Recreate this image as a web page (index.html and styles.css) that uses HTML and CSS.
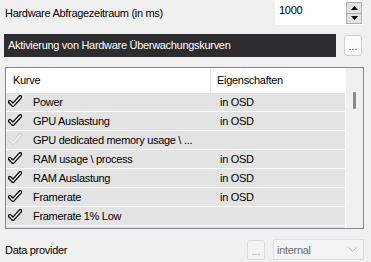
FILE: index.html
```html
<!DOCTYPE html>
<html lang="de">
<head>
  <meta charset="UTF-8">
  <title>Hardware Überwachung</title>
  <link rel="stylesheet" href="styles.css">
</head>
<body>
  <div class="panel">
    <div class="top-row">
      <span class="label">Hardware Abfragezeitraum (in ms)</span>
      <div class="spinner">
        <span class="spin-value">1000</span>
        <div class="spin-buttons">
          <div class="spin-btn"><svg width="7" height="4" viewBox="0 0 7 4"><polygon points="0,4 7,4 3.5,0" fill="#000"/></svg></div>
          <div class="spin-btn"><svg width="7" height="4" viewBox="0 0 7 4"><polygon points="0,0 7,0 3.5,4" fill="#000"/></svg></div>
        </div>
      </div>
    </div>

    <div class="bar-row">
      <div class="dark-bar">Aktivierung von Hardware Überwachungskurven</div>
      <div class="dots-btn">...</div>
    </div>

    <div class="list">
      <div class="list-main">
        <div class="list-head">
          <div class="col-name">Kurve</div>
          <div class="col-props">Eigenschaften</div>
        </div>
        <div class="list-row"><span class="check"><svg width="14" height="13" viewBox="0 0 14 13"><path d="M1.8 6.8 L5 10 L12.3 2" fill="none" stroke="#000" stroke-width="4" stroke-linecap="round" stroke-linejoin="round"/><path d="M1.8 6.8 L5 10 L12.3 2" fill="none" stroke="#fff" stroke-width="1.3" stroke-linecap="round" stroke-linejoin="round"/></svg></span><span class="name">Power</span><span class="props">in OSD</span></div>
        <div class="list-row"><span class="check"><svg width="14" height="13" viewBox="0 0 14 13"><path d="M1.8 6.8 L5 10 L12.3 2" fill="none" stroke="#000" stroke-width="4" stroke-linecap="round" stroke-linejoin="round"/><path d="M1.8 6.8 L5 10 L12.3 2" fill="none" stroke="#fff" stroke-width="1.3" stroke-linecap="round" stroke-linejoin="round"/></svg></span><span class="name">GPU Auslastung</span><span class="props">in OSD</span></div>
        <div class="list-row"><span class="check"><svg width="14" height="13" viewBox="0 0 14 13"><path d="M1.8 6.8 L5 10 L12.3 2" fill="none" stroke="#d4d4d4" stroke-width="4" stroke-linecap="round" stroke-linejoin="round"/><path d="M1.8 6.8 L5 10 L12.3 2" fill="none" stroke="#f4f4f4" stroke-width="1.3" stroke-linecap="round" stroke-linejoin="round"/></svg></span><span class="name">GPU dedicated memory usage \ ...</span><span class="props"></span></div>
        <div class="list-row"><span class="check"><svg width="14" height="13" viewBox="0 0 14 13"><path d="M1.8 6.8 L5 10 L12.3 2" fill="none" stroke="#000" stroke-width="4" stroke-linecap="round" stroke-linejoin="round"/><path d="M1.8 6.8 L5 10 L12.3 2" fill="none" stroke="#fff" stroke-width="1.3" stroke-linecap="round" stroke-linejoin="round"/></svg></span><span class="name">RAM usage \ process</span><span class="props">in OSD</span></div>
        <div class="list-row"><span class="check"><svg width="14" height="13" viewBox="0 0 14 13"><path d="M1.8 6.8 L5 10 L12.3 2" fill="none" stroke="#000" stroke-width="4" stroke-linecap="round" stroke-linejoin="round"/><path d="M1.8 6.8 L5 10 L12.3 2" fill="none" stroke="#fff" stroke-width="1.3" stroke-linecap="round" stroke-linejoin="round"/></svg></span><span class="name">RAM Auslastung</span><span class="props">in OSD</span></div>
        <div class="list-row"><span class="check"><svg width="14" height="13" viewBox="0 0 14 13"><path d="M1.8 6.8 L5 10 L12.3 2" fill="none" stroke="#000" stroke-width="4" stroke-linecap="round" stroke-linejoin="round"/><path d="M1.8 6.8 L5 10 L12.3 2" fill="none" stroke="#fff" stroke-width="1.3" stroke-linecap="round" stroke-linejoin="round"/></svg></span><span class="name">Framerate</span><span class="props">in OSD</span></div>
        <div class="list-row"><span class="check"><svg width="14" height="13" viewBox="0 0 14 13"><path d="M1.8 6.8 L5 10 L12.3 2" fill="none" stroke="#000" stroke-width="4" stroke-linecap="round" stroke-linejoin="round"/><path d="M1.8 6.8 L5 10 L12.3 2" fill="none" stroke="#fff" stroke-width="1.3" stroke-linecap="round" stroke-linejoin="round"/></svg></span><span class="name">Framerate 1% Low</span><span class="props"></span></div>
        <div class="list-row"><span class="check"></span><span class="name"></span><span class="props"></span></div>
      </div>
      <div class="scrollbar"><div class="thumb"></div></div>
    </div>

    <div class="bottom-row">
      <span class="label">Data provider</span>
      <div class="small-btn">...</div>
      <div class="dropdown">
        <span>internal</span>
        <svg width="9" height="5" viewBox="0 0 9 5"><path d="M0.5 0.5 L4.5 4.5 L8.5 0.5" fill="none" stroke="#b8b8b8" stroke-width="1"/></svg>
      </div>
    </div>
  </div>
</body>
</html>
```

FILE: styles.css
```css
body {
  margin: 0;
  background: #f0f0f0;
  font-family: "Liberation Sans", Arial, sans-serif;
  font-size: 11px;
  letter-spacing: -0.3px;
  color: #000;
}
.panel {
  width: 371px;
  height: 262px;
  overflow: hidden;
  white-space: nowrap;
}
.top-row {
  display: flex;
  align-items: center;
  height: 26px;
  padding-left: 5px;
}
.top-row .label {
  flex: 1;
  padding-bottom: 1px;
}
.spinner {
  display: flex;
  width: 88px;
  height: 25px;
  margin-right: 8px;
  background: #fff;
  align-self: flex-start;
}
.spin-value {
  flex: 1;
  padding: 4px 0 0 4px;
}
.spin-buttons {
  display: flex;
  flex-direction: column;
  width: 14px;
  margin: 2px 1px 1px 0;
  border: 1px solid #adadad;
}
.spin-btn {
  flex: 1;
  display: flex;
  align-items: center;
  justify-content: center;
  background: #e1e1e1;
}
.spin-btn + .spin-btn {
  border-top: 1px solid #adadad;
}
.bar-row {
  display: flex;
  align-items: center;
  margin-top: 8px;
  padding-left: 4px;
  height: 23px;
}
.dark-bar {
  width: 328px;
  height: 23px;
  line-height: 22px;
  padding-left: 4px;
  background: #2d2d30;
  color: #fff;
}
.dots-btn {
  width: 16px;
  height: 19px;
  margin-left: 8px;
  border: 1px solid #cfcfcf;
  border-radius: 3px;
  background: #fbfbfb;
  font-size: 10px;
  letter-spacing: 0;
  text-align: center;
  line-height: 22px;
  color: #333;
}
.list {
  display: flex;
  margin: 10px 0 0 5px;
  width: 357px;
  height: 160px;
  border: 1px solid #828790;
  background: #fff;
  overflow: hidden;
}
.list-main {
  width: 339px;
}
.list-head {
  display: flex;
  height: 25px;
  line-height: 25px;
}
.col-name {
  width: 197px;
  padding-left: 7px;
  border-right: 1px solid #e5e5e5;
}
.col-props {
  padding-left: 6px;
}
.list-row {
  display: flex;
  align-items: center;
  height: 18px;
  margin-bottom: 1px;
  background: #e3e3e3;
}
.check {
  width: 25px;
  padding: 0 0 2px 2px;
  display: flex;
  align-items: center;
}
.name {
  width: 187px;
}
.props {
  flex: 1;
}
.scrollbar {
  width: 17px;
  margin-left: 1px;
  background: #f0f0f0;
  position: relative;
}
.thumb {
  position: absolute;
  left: 7px;
  top: 24px;
  width: 3px;
  height: 17px;
  background: #8a8a8a;
  border-radius: 1px;
}
.bottom-row {
  display: flex;
  align-items: center;
  margin-top: 10px;
  padding-left: 5px;
  height: 21px;
}
.bottom-row .label {
  flex: 1;
}
.small-btn {
  width: 16px;
  height: 18px;
  border: 1px solid #dcdcdc;
  border-radius: 3px;
  background: #f4f4f4;
  color: #9a9a9a;
  font-size: 10px;
  letter-spacing: 0;
  text-align: center;
  line-height: 22px;
}
.dropdown {
  display: flex;
  align-items: center;
  justify-content: space-between;
  width: 80px;
  height: 19px;
  margin: 0 7px 0 8px;
  padding: 0 6px 0 3px;
  border: 1px solid #dedede;
  background: #f4f4f4;
  color: #6d6d6d;
}
```
